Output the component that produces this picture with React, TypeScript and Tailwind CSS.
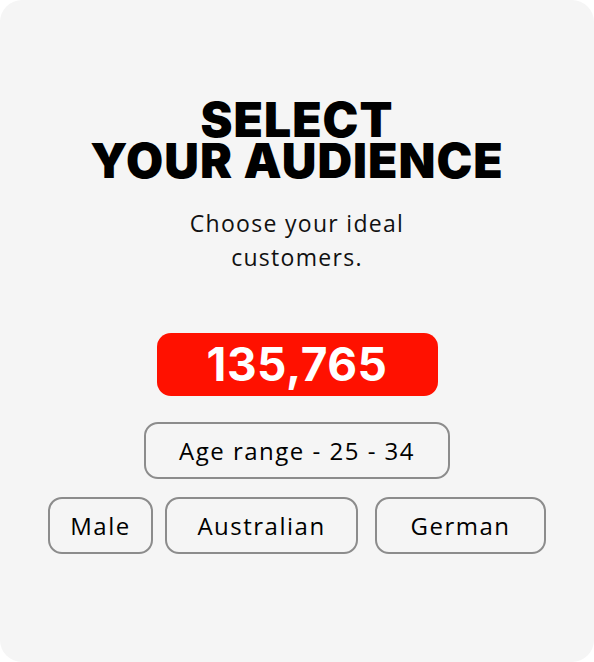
const tags = [
  { label: "Male", cls: "w-[105px]" },
  { label: "Australian", cls: "w-[193px]" },
  { label: "German", cls: "w-[171px] ml-[5px]" },
];

export default function App() {
  return (
    <div className="w-[594px] h-[662px] bg-white">
      <div className="w-full h-full rounded-[22px] bg-[#f5f5f5] flex flex-col items-center pt-[99px]">
        <h1 className="text-center text-black font-black uppercase text-[48px] leading-[41px] tracking-[1px] [font-family:Inter,'Liberation_Sans',sans-serif]">
          Select
          <br />
          Your Audience
        </h1>
        <p className="mt-[25px] w-[280px] text-center text-[23px] leading-[34px] tracking-[1.3px] text-[#111] [font-family:'Open_Sans','Liberation_Sans',sans-serif]">
          Choose your ideal customers.
        </p>
        <div className="mt-[59px] w-[281px] h-[63px] rounded-[14px] bg-[#ff1100] flex items-center justify-center text-white font-bold text-[46px] tracking-[0.5px] [font-family:Inter,'Liberation_Sans',sans-serif]">
          135,765
        </div>
        <div className="mt-[26px] w-[306px] h-[57px] rounded-[14px] border-2 border-[#8c8c8c] flex items-center justify-center text-[24px] tracking-[1.5px] text-black [font-family:'Open_Sans','Liberation_Sans',sans-serif]">
          Age range - 25 - 34
        </div>
        <div className="mt-[18px] flex gap-[12px]">
          {tags.map((t) => (
            <div
              key={t.label}
              className={`${t.cls} h-[57px] rounded-[14px] border-2 border-[#8c8c8c] flex items-center justify-center text-[24px] tracking-[1.5px] text-black [font-family:'Open_Sans','Liberation_Sans',sans-serif]`}
            >
              {t.label}
            </div>
          ))}
        </div>
      </div>
    </div>
  );
}
